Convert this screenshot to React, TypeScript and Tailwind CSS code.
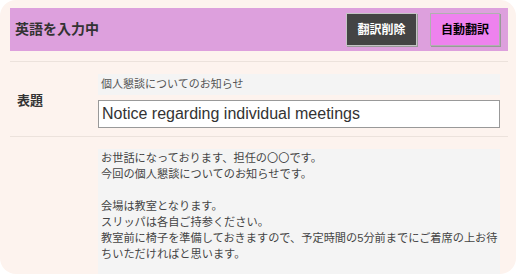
const font = { fontFamily: '"Liberation Sans", "Noto Sans CJK JP", sans-serif' };

const body = `お世話になっております、担任の〇〇です。
今回の個人懇談についてのお知らせです。

会場は教室となります。
スリッパは各自ご持参ください。
教室前に椅子を準備しておきますので、予定時間の5分前までにご着席の上お待ちいただければと思います。`;

export default function App() {
  return (
    <div className="w-[516px] h-[274px] bg-white" style={font}>
      <div className="h-full overflow-hidden rounded-2xl bg-[#fdf3ee] pl-[10px] pr-[8px] pt-[8px]">
        {/* header */}
        <div className="flex h-[43px] items-center justify-between bg-[#dda0dd] pl-[5px] pr-[8px]">
          <div className="text-[14px] font-bold text-[#333]">英語を入力中</div>
          <div className="flex gap-[13px]">
            <button className="h-[33px] w-[71px] border border-[#c4c4c4] bg-[#444] text-[12px] font-bold text-white shadow-[1px_1px_0_#999]">
              翻訳削除
            </button>
            <button className="h-[33px] w-[70px] border border-[#b0b0b0] bg-[#ee82ee] text-[12px] font-bold text-black shadow-[1px_1px_0_#999]">
              自動翻訳
            </button>
          </div>
        </div>

        <div className="mt-[10px] border-t border-[#ece2dc]" />

        {/* subject row */}
        <div className="flex items-center pb-[8px] pt-[12px]">
          <div className="w-[88px] pl-[7px] text-[13px] font-bold text-[#333]">表題</div>
          <div className="flex-1 pr-[8px]">
            <div className="h-[21px] bg-[#f4f4f4] px-[3px] text-[11px] leading-[21px] text-[#555]">
              個人懇談についてのお知らせ
            </div>
            <input
              className="mt-[5px] h-[28px] w-full border border-[#999] bg-white px-[3px] text-[16px] text-[#333] outline-none"
              defaultValue="Notice regarding individual meetings"
            />
          </div>
        </div>

        <div className="border-t border-[#ece2dc]" />

        {/* body row */}
        <div className="flex pt-[12px]">
          <div className="w-[88px]" />
          <div className="flex-1 pr-[8px]">
            <div className="h-[200px] whitespace-pre-line bg-[#f4f4f4] pl-[3px] pr-[2px] pt-[1px] text-[11.2px] leading-[16px] text-[#444]">
              {body}
            </div>
          </div>
        </div>
      </div>
    </div>
  );
}
